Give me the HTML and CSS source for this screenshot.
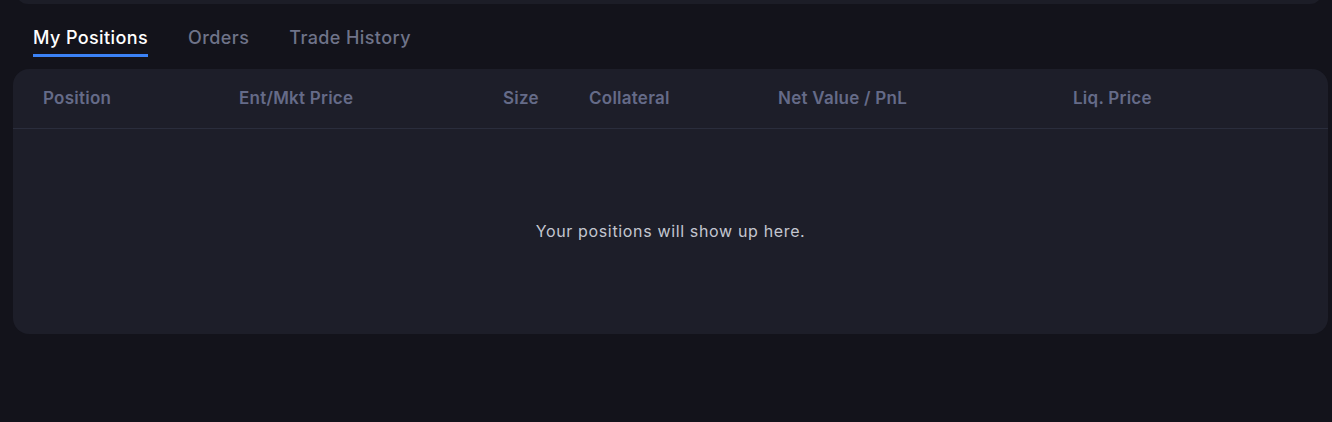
FILE: index.html
```html
<!DOCTYPE html>
<html lang="en">
  <head>
    <meta charset="utf-8" />
    <title>Positions</title>
    <link rel="stylesheet" href="styles.css">
  </head>
  <body>
    <div class="top-card"></div>

    <div class="tabs">
      <div class="tab active">My Positions</div>
      <div class="tab">Orders</div>
      <div class="tab">Trade History</div>
    </div>

    <div class="table-card">
      <div class="table-head">
        <div>Position</div>
        <div>Ent/Mkt Price</div>
        <div>Size</div>
        <div>Collateral</div>
        <div>Net Value / PnL</div>
        <div>Liq. Price</div>
      </div>
      <div class="empty">Your positions will show up here.</div>
    </div>
  </body>
</html>
```

FILE: styles.css
```css
html,
body {
  margin: 0;
  height: 100%;
  background: #13131b;
  font-family: Inter, "Noto Sans", sans-serif;
}

.top-card {
  margin: -20px 10px 0 16px;
  height: 24px;
  background: #1c1d27;
  border-radius: 0 0 12px 12px;
}

/* Tabs */

.tabs {
  display: flex;
  gap: 40px;
  padding: 0 33px;
  margin-top: 22px;
}

.tab {
  font-size: 18px;
  font-weight: 500;
  letter-spacing: 0.4px;
  color: #6f7389;
  line-height: 24px;
  padding-bottom: 4px;
  border-bottom: 3px solid transparent;
}

.tab.active {
  color: #fff;
  border-bottom-color: #3b82f6;
}

/* Table */

.table-card {
  margin: 12px 4px 0 13px;
  height: 265px;
  background: #1d1e29;
  border-radius: 16px;
}

.table-head {
  display: grid;
  grid-template-columns: 196px 264px 86px 189px 295px 1fr;
  padding: 0 30px;
  height: 59px;
  align-items: center;
  border-bottom: 1px solid #2a2d3c;
  font-size: 17px;
  font-weight: 600;
  letter-spacing: 0.25px;
  color: #656b88;
}

.table-head div {
  margin-top: -2px;
}

.empty {
  text-align: center;
  padding-top: 92px;
  font-size: 16px;
  letter-spacing: 0.65px;
  color: #c3c6d0;
}
```
